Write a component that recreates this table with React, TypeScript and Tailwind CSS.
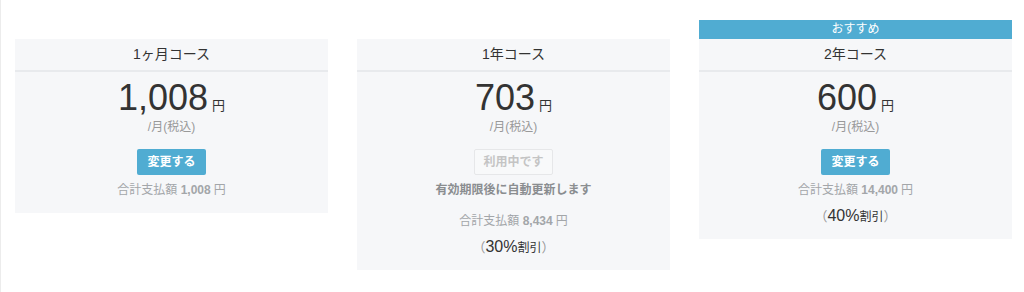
import React from "react";

type Plan = {
  title: string;
  price: string;
  total: string;
  current?: boolean;
  discount?: string;
  recommended?: boolean;
};

const plans: Plan[] = [
  { title: "1ヶ月コース", price: "1,008", total: "1,008" },
  { title: "1年コース", price: "703", total: "8,434", current: true, discount: "30" },
  { title: "2年コース", price: "600", total: "14,400", discount: "40", recommended: true },
];

function PlanCard({ plan }: { plan: Plan }) {
  return (
    <div className={`w-[313px] flex flex-col ${plan.recommended ? "" : "mt-[19px]"}`}>
      {plan.recommended && (
        <div className="h-[19px] bg-[#50acd2] text-white text-[12px] leading-[19px] text-center">
          おすすめ
        </div>
      )}
      <div className="bg-[#f6f7f9]">
        <div className="h-[31px] flex items-center justify-center text-[14px] text-[#333] border-b-2 border-[#e8eaed] box-content">
          {plan.title}
        </div>
        <div className="flex flex-col items-center pt-[6px] pb-[10px]">
          <div className="flex items-baseline">
            <span className="text-[36px] leading-[40px] text-[#333]">{plan.price}</span>
            <span className="text-[13px] text-[#333] ml-[4px]">円</span>
          </div>
          <div className="text-[12px] leading-[18px] text-[#999]">/月(税込)</div>
          {plan.current ? (
            <div className="mt-[13px] h-[26px] px-[8px] flex items-center border border-[#e6e7e9] bg-[#f8f9fa] rounded-[2px] text-[12px] font-bold text-[#c4c4c4]">
              利用中です
            </div>
          ) : (
            <button className="mt-[13px] h-[26px] px-[10px] flex items-center bg-[#50acd2] rounded-[2px] text-[12px] font-bold text-white">
              変更する
            </button>
          )}
          {plan.current && (
            <div className="mt-[6px] text-[12px] leading-[18px] font-bold text-[#8a8d90]">
              有効期限後に自動更新します
            </div>
          )}
          <div
            className={`${plan.current ? "mt-[13px]" : "mt-[6px]"} ${plan.discount ? "" : "mb-[4px]"} text-[12px] leading-[18px] text-[#a3a6a9]`}
          >
            合計支払額 <span className="font-bold">{plan.total}</span>
            <span className="ml-[3px]">円</span>
          </div>
          {plan.discount && (
            <div className="mt-[5px] leading-[24px] flex items-baseline">
              <span className="text-[13px] text-[#999]">（</span>
              <span className="text-[16px] text-[#333]">{plan.discount}%</span>
              <span className="text-[12px] text-[#333]">割引</span>
              <span className="text-[13px] text-[#999]">）</span>
            </div>
          )}
        </div>
      </div>
    </div>
  );
}

export default function App() {
  return (
    <div
      className="w-[1024px] h-[292px] bg-white border-l border-[#ececec] pt-[20px] pl-[14px] flex items-start gap-[29px]"
      style={{ fontFamily: '"Liberation Sans", "Noto Sans CJK JP", sans-serif' }}
    >
      {plans.map((p) => (
        <PlanCard key={p.title} plan={p} />
      ))}
    </div>
  );
}
